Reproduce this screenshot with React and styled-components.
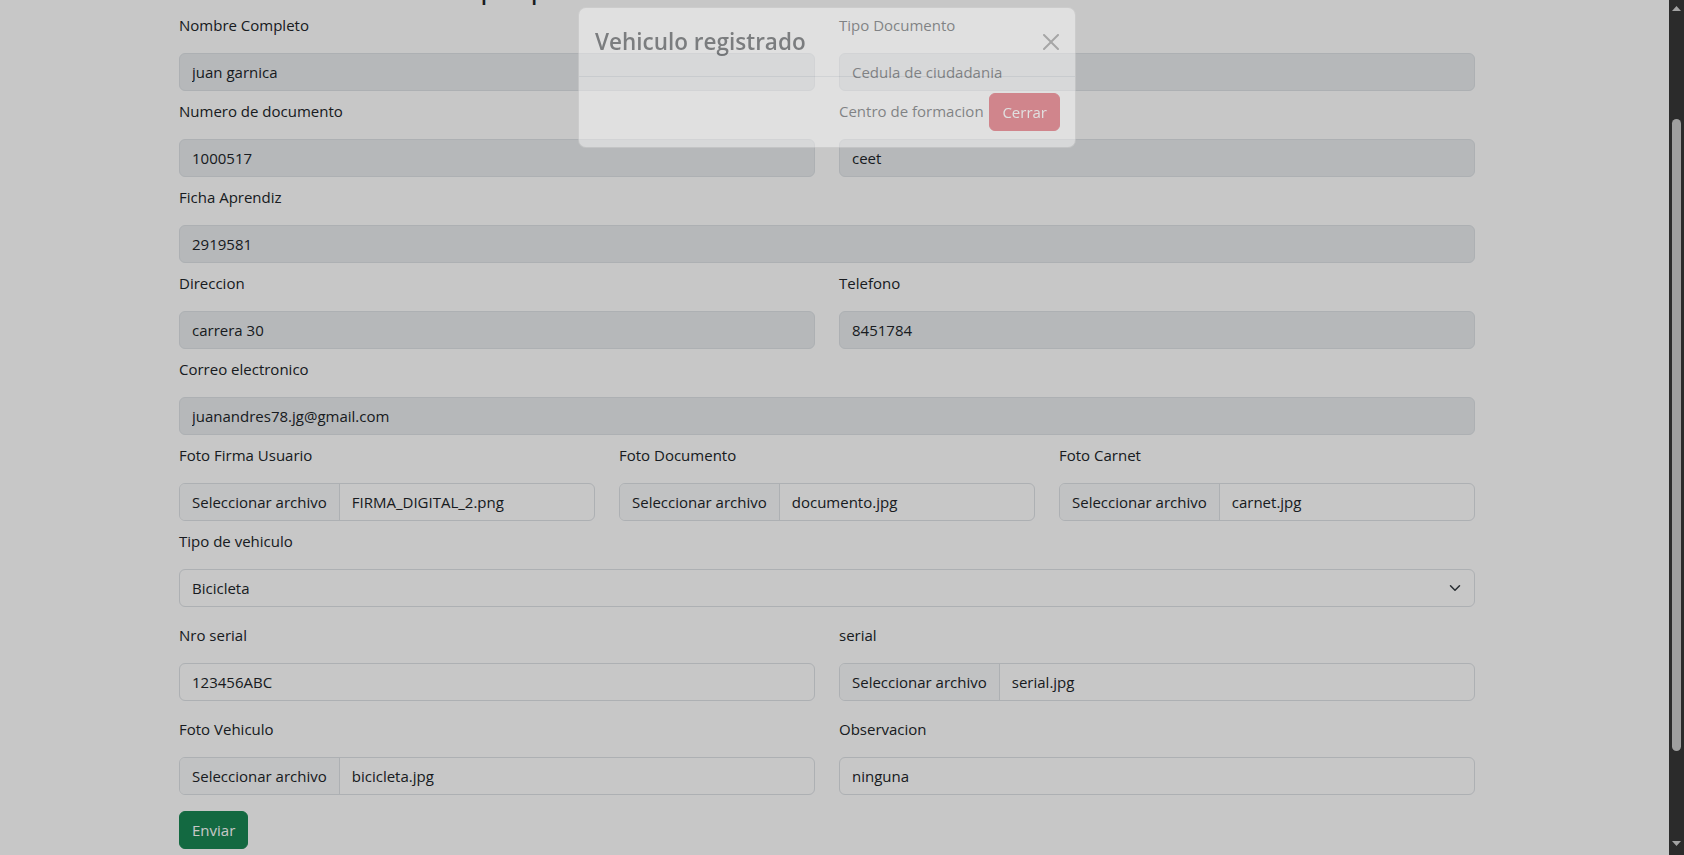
import React, { useLayoutEffect } from "react";
import styled, { createGlobalStyle } from "styled-components";

const GlobalStyle = createGlobalStyle`
  *, *::before, *::after { box-sizing: border-box; }
  html { overflow-y: scroll; scroll-behavior: auto; }
  body {
    margin: 0;
    background: #ffffff;
    color: #212529;
    font-family: "Open Sans", "Noto Sans", sans-serif;
    font-size: 15px;
    line-height: 24px;
  }
`;

const Page = styled.div`
  width: 1320px;
  margin-left: 167px;
  padding: 109px 12px 126px;
`;

const Heading = styled.h2`
  margin: 0 0 8px;
  font-size: 31px;
  line-height: 1.2;
  font-weight: 500;
  padding-left: 65px;
`;

const Form = styled.form`
  display: flex;
  flex-direction: column;
`;

const Row = styled.div`
  display: grid;
  grid-template-columns: repeat(${(p) => p.$cols || 1}, 1fr);
  column-gap: 24px;
  margin-bottom: ${(p) => p.$space || 8}px;
`;

const Field = styled.div`
  display: flex;
  flex-direction: column;
`;

const Label = styled.label`
  display: block;
  margin-bottom: 16px;
  line-height: 24px;
`;

const TextInput = styled.input`
  height: 38px;
  width: 100%;
  padding: 6px 12px;
  border: 1px solid #dee2e6;
  border-radius: 6px;
  background: #ffffff;
  font: inherit;
  color: #212529;
  outline: none;

  &:disabled {
    background: #e9ecef;
    color: #212529;
    -webkit-text-fill-color: #212529;
    opacity: 1;
  }
`;

const FileField = styled.div`
  display: flex;
  align-items: center;
  height: 38px;
  border: 1px solid #dee2e6;
  border-radius: 6px;
  background: #ffffff;
  overflow: hidden;
`;

const FileButton = styled.span`
  display: flex;
  align-items: center;
  height: 100%;
  padding: 0 12px;
  background: #f8f9fa;
  border-right: 1px solid #dee2e6;
  white-space: nowrap;
`;

const FileName = styled.span`
  padding-left: 12px;
  white-space: nowrap;
`;

const SelectWrap = styled.div`
  position: relative;
`;

const Select = styled.select`
  appearance: none;
  width: 100%;
  height: 38px;
  padding: 6px 36px 6px 12px;
  border: 1px solid #dee2e6;
  border-radius: 6px;
  background: #ffffff;
  font: inherit;
  color: #212529;
  outline: none;
`;

const Chevron = styled.svg`
  position: absolute;
  right: 12px;
  top: 13px;
  pointer-events: none;
`;

const SubmitButton = styled.button`
  align-self: flex-start;
  height: 38px;
  padding: 0 12px;
  border: 1px solid #198754;
  border-radius: 6px;
  background: #198754;
  color: #ffffff;
  font: inherit;
`;

const Backdrop = styled.div`
  position: fixed;
  inset: 0;
  background: rgba(0, 0, 0, 0.22);
`;

const Modal = styled.div`
  position: fixed;
  top: 7px;
  left: 578px;
  width: 498px;
  background: #ffffff;
  border: 1px solid rgba(0, 0, 0, 0.175);
  border-radius: 8px;
  opacity: 0.45;
`;

const ModalHeader = styled.div`
  display: flex;
  align-items: center;
  justify-content: space-between;
  padding: 16px;
  border-bottom: 1px solid #dee2e6;
`;

const ModalTitle = styled.h5`
  margin: 0;
  font-size: 22.5px;
  line-height: 36px;
  font-weight: 600;
`;

const CloseButton = styled.button`
  display: flex;
  padding: 0;
  border: 0;
  background: transparent;
  opacity: 0.5;
`;

const ModalFooter = styled.div`
  display: flex;
  justify-content: flex-end;
  padding: 12px 11px;
`;

const DangerButton = styled.button`
  margin: 4px;
  height: 38px;
  padding: 0 12px;
  border: 1px solid #dc3545;
  border-radius: 6px;
  background: #dc3545;
  color: #ffffff;
  font: inherit;
`;

const ScrollRail = styled.div`
  position: fixed;
  top: 0;
  right: 0;
  width: 15px;
  height: 100vh;
  background: #2b2b2b;
`;

const ScrollThumb = styled.div`
  position: absolute;
  left: 3px;
  top: 119px;
  width: 9px;
  height: 632px;
  border-radius: 5px;
  background: #9f9f9f;
`;

const ScrollArrow = styled.svg`
  position: absolute;
  left: 3px;
  ${(p) => (p.$dir === "up" ? "top: 6px;" : "bottom: 9px;")}
`;

const TextField = ({ label, value, disabled }) => (
  <Field>
    <Label>{label}</Label>
    <TextInput value={value} disabled={disabled} readOnly />
  </Field>
);

const FileInput = ({ label, file }) => (
  <Field>
    <Label>{label}</Label>
    <FileField>
      <FileButton>Seleccionar archivo</FileButton>
      <FileName>{file}</FileName>
    </FileField>
  </Field>
);

export default function App() {
  useLayoutEffect(() => {
    window.scrollTo(0, 141);
  }, []);

  return (
    <>
      <GlobalStyle />
      <Page>
        <Heading>Informacion del propietario</Heading>
        <Form onSubmit={(e) => e.preventDefault()}>
          <Row $cols={2}>
            <TextField label="Nombre Completo" value="juan garnica" disabled />
            <TextField label="Tipo Documento" value="Cedula de ciudadania" disabled />
          </Row>
          <Row $cols={2}>
            <TextField label="Numero de documento" value="1000517" disabled />
            <TextField label="Centro de formacion" value="ceet" disabled />
          </Row>
          <Row>
            <TextField label="Ficha Aprendiz" value="2919581" disabled />
          </Row>
          <Row $cols={2}>
            <TextField label="Direccion" value="carrera 30" disabled />
            <TextField label="Telefono" value="8451784" disabled />
          </Row>
          <Row>
            <TextField label="Correo electronico" value="juanandres78.jg@gmail.com" disabled />
          </Row>
          <Row $cols={3}>
            <FileInput label="Foto Firma Usuario" file="FIRMA_DIGITAL_2.png" />
            <FileInput label="Foto Documento" file="documento.jpg" />
            <FileInput label="Foto Carnet" file="carnet.jpg" />
          </Row>
          <Row $space={16}>
            <Field>
              <Label>Tipo de vehiculo</Label>
              <SelectWrap>
                <Select defaultValue="bicicleta">
                  <option value="bicicleta">Bicicleta</option>
                  <option value="moto">Moto</option>
                  <option value="carro">Carro</option>
                </Select>
                <Chevron width="16" height="12" viewBox="0 0 16 16">
                  <path d="m2 5 6 6 6-6" fill="none" stroke="#343a40" strokeWidth="2" strokeLinecap="round" strokeLinejoin="round" />
                </Chevron>
              </SelectWrap>
            </Field>
          </Row>
          <Row $cols={2} $space={16}>
            <TextField label="Nro serial" value="123456ABC" />
            <FileInput label="serial" file="serial.jpg" />
          </Row>
          <Row $cols={2} $space={16}>
            <FileInput label="Foto Vehiculo" file="bicicleta.jpg" />
            <TextField label="Observacion" value="ninguna" />
          </Row>
          <SubmitButton type="submit">Enviar</SubmitButton>
        </Form>
      </Page>
      <Backdrop />
      <Modal role="dialog">
        <ModalHeader>
          <ModalTitle>Vehiculo registrado</ModalTitle>
          <CloseButton aria-label="Close">
            <svg width="16" height="16" viewBox="0 0 16 16">
              <path d="M.293.293a1 1 0 0 1 1.414 0L8 6.586 14.293.293a1 1 0 1 1 1.414 1.414L9.414 8l6.293 6.293a1 1 0 0 1-1.414 1.414L8 9.414l-6.293 6.293a1 1 0 0 1-1.414-1.414L6.586 8 .293 1.707a1 1 0 0 1 0-1.414z" fill="#000" />
            </svg>
          </CloseButton>
        </ModalHeader>
        <ModalFooter>
          <DangerButton>Cerrar</DangerButton>
        </ModalFooter>
      </Modal>
      <ScrollRail aria-hidden="true">
        <ScrollArrow $dir="up" width="9" height="5" viewBox="0 0 9 5">
          <path d="M4.5 0 9 5H0z" fill="#a3a3a3" />
        </ScrollArrow>
        <ScrollThumb />
        <ScrollArrow $dir="down" width="9" height="5" viewBox="0 0 9 5">
          <path d="M0 0h9L4.5 5z" fill="#a3a3a3" />
        </ScrollArrow>
      </ScrollRail>
    </>
  );
}
